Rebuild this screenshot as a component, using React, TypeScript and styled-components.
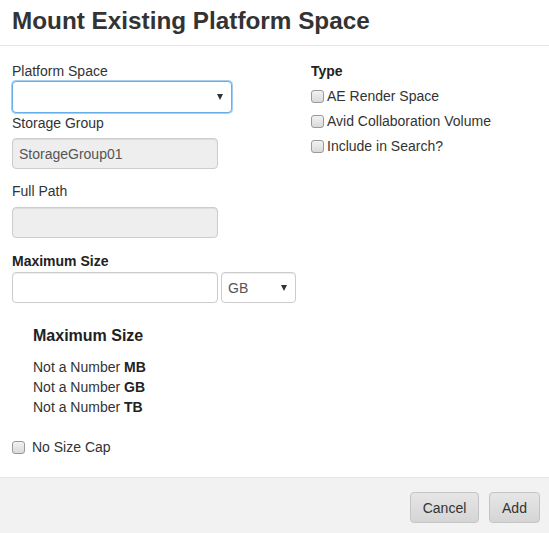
import React from "react";
import styled, { createGlobalStyle } from "styled-components";

const GlobalStyle = createGlobalStyle`
  html, body {
    margin: 0;
    padding: 0;
    background: #ffffff;
  }
  body {
    font-family: "Liberation Sans", Arial, sans-serif;
    font-size: 14px;
    line-height: 20px;
    color: #333333;
  }
  * {
    box-sizing: border-box;
  }
`;

const Modal = styled.div`
  width: 549px;
  height: 533px;
  display: flex;
  flex-direction: column;
  background: #ffffff;
`;

const Header = styled.div`
  height: 46px;
  padding: 7px 12px 0;
  border-bottom: 1px solid #e5e5e5;
`;

const Title = styled.h3`
  margin: 0;
  font-size: 24.3px;
  line-height: 28px;
  font-weight: bold;
  color: #333333;
`;

const Body = styled.div`
  flex: 1;
  padding: 15px 12px 0;
  display: flex;
  flex-direction: column;
`;

const Columns = styled.div`
  display: flex;
`;

const LeftCol = styled.div`
  width: 299px;
  display: flex;
  flex-direction: column;
`;

const RightCol = styled.div`
  flex: 1;
  display: flex;
  flex-direction: column;
`;

const Label = styled.label<{ $bold?: boolean; $gapTop?: number; $gapBottom?: number }>`
  display: block;
  font-weight: ${(p) => (p.$bold ? "bold" : "normal")};
  color: ${(p) => (p.$bold ? "#222222" : "#333333")};
  margin-top: ${(p) => p.$gapTop ?? 0}px;
  margin-bottom: ${(p) => p.$gapBottom ?? 0}px;
`;

const SelectBox = styled.div<{ $width: number; $height: number; $focused?: boolean }>`
  position: relative;
  width: ${(p) => p.$width}px;
  height: ${(p) => p.$height}px;
  border: 1px solid ${(p) => (p.$focused ? "#66afe9" : "#cccccc")};
  border-radius: 4px;
  background: #ffffff;
  box-shadow: ${(p) =>
    p.$focused ? "0 0 0 1px rgba(102, 175, 233, 0.6)" : "inset 0 1px 1px rgba(0, 0, 0, 0.075)"};
  display: flex;
  align-items: center;
  padding: 0 6px;
  color: #555555;
`;

const Arrow = styled.span`
  position: absolute;
  right: 8px;
  top: 50%;
  transform: translateY(-50%);
  width: 0;
  height: 0;
  border-left: 3.5px solid transparent;
  border-right: 3.5px solid transparent;
  border-top: 6px solid #333333;
`;

const TextInput = styled.div<{ $disabled?: boolean }>`
  width: 206px;
  height: 31px;
  border: 1px solid #cccccc;
  border-radius: 4px;
  background: ${(p) => (p.$disabled ? "#eeeeee" : "#ffffff")};
  box-shadow: inset 0 1px 1px rgba(0, 0, 0, 0.075);
  display: flex;
  align-items: center;
  padding: 0 6px;
  color: #555555;
`;

const SizeRow = styled.div`
  display: flex;
  gap: 3px;
`;

const Summary = styled.div`
  margin-top: 23px;
  padding-left: 21px;
`;

const SummaryTitle = styled.h4`
  margin: 0 0 11px;
  font-size: 16px;
  line-height: 20px;
  font-weight: bold;
  color: #222222;
`;

const SummaryLine = styled.div`
  color: #333333;
  b {
    color: #222222;
  }
`;

const CheckRow = styled.label<{ $gap?: number; $top?: number }>`
  display: flex;
  align-items: center;
  gap: ${(p) => p.$gap ?? 3}px;
  height: 20px;
  margin-top: ${(p) => p.$top ?? 0}px;
`;

const Box = styled.span`
  width: 13px;
  height: 13px;
  border: 1px solid #9a9a9a;
  border-radius: 3px;
  background: linear-gradient(#f2f2f2, #d9d9d9);
  flex-shrink: 0;
`;

const Footer = styled.div`
  height: 56px;
  border-top: 1px solid #e5e5e5;
  background: #f2f2f2;
  display: flex;
  justify-content: flex-end;
  align-items: flex-start;
  gap: 10px;
  padding: 14px 9px 0 0;
`;

const Button = styled.button<{ $width: number }>`
  width: ${(p) => p.$width}px;
  height: 31px;
  border: 1px solid #c4c4c4;
  border-radius: 4px;
  background: linear-gradient(#e6e6e6, #d5d5d5);
  color: #333333;
  font-family: "Liberation Sans", Arial, sans-serif;
  font-size: 14px;
  padding: 0;
`;

export default function App() {
  return (
    <Modal>
      <GlobalStyle />
      <Header>
        <Title>Mount Existing Platform Space</Title>
      </Header>
      <Body>
        <Columns>
          <LeftCol>
            <Label>Platform Space</Label>
            <SelectBox $width={220} $height={32} $focused>
              <Arrow />
            </SelectBox>
            <Label $gapBottom={5}>Storage Group</Label>
            <TextInput $disabled>StorageGroup01</TextInput>
            <Label $gapTop={12} $gapBottom={6}>
              Full Path
            </Label>
            <TextInput $disabled />
            <Label $bold $gapTop={13} $gapBottom={1}>
              Maximum Size
            </Label>
            <SizeRow>
              <TextInput />
              <SelectBox $width={75} $height={31}>
                GB
                <Arrow />
              </SelectBox>
            </SizeRow>
          </LeftCol>
          <RightCol>
            <Label $bold>Type</Label>
            <CheckRow $top={5}>
              <Box />
              AE Render Space
            </CheckRow>
            <CheckRow $top={5}>
              <Box />
              Avid Collaboration Volume
            </CheckRow>
            <CheckRow $top={5}>
              <Box />
              Include in Search?
            </CheckRow>
          </RightCol>
        </Columns>
        <Summary>
          <SummaryTitle>Maximum Size</SummaryTitle>
          <SummaryLine>
            Not a Number <b>MB</b>
          </SummaryLine>
          <SummaryLine>
            Not a Number <b>GB</b>
          </SummaryLine>
          <SummaryLine>
            Not a Number <b>TB</b>
          </SummaryLine>
        </Summary>
        <CheckRow $gap={7} $top={20}>
          <Box />
          No Size Cap
        </CheckRow>
      </Body>
      <Footer>
        <Button $width={69}>Cancel</Button>
        <Button $width={51}>Add</Button>
      </Footer>
    </Modal>
  );
}
